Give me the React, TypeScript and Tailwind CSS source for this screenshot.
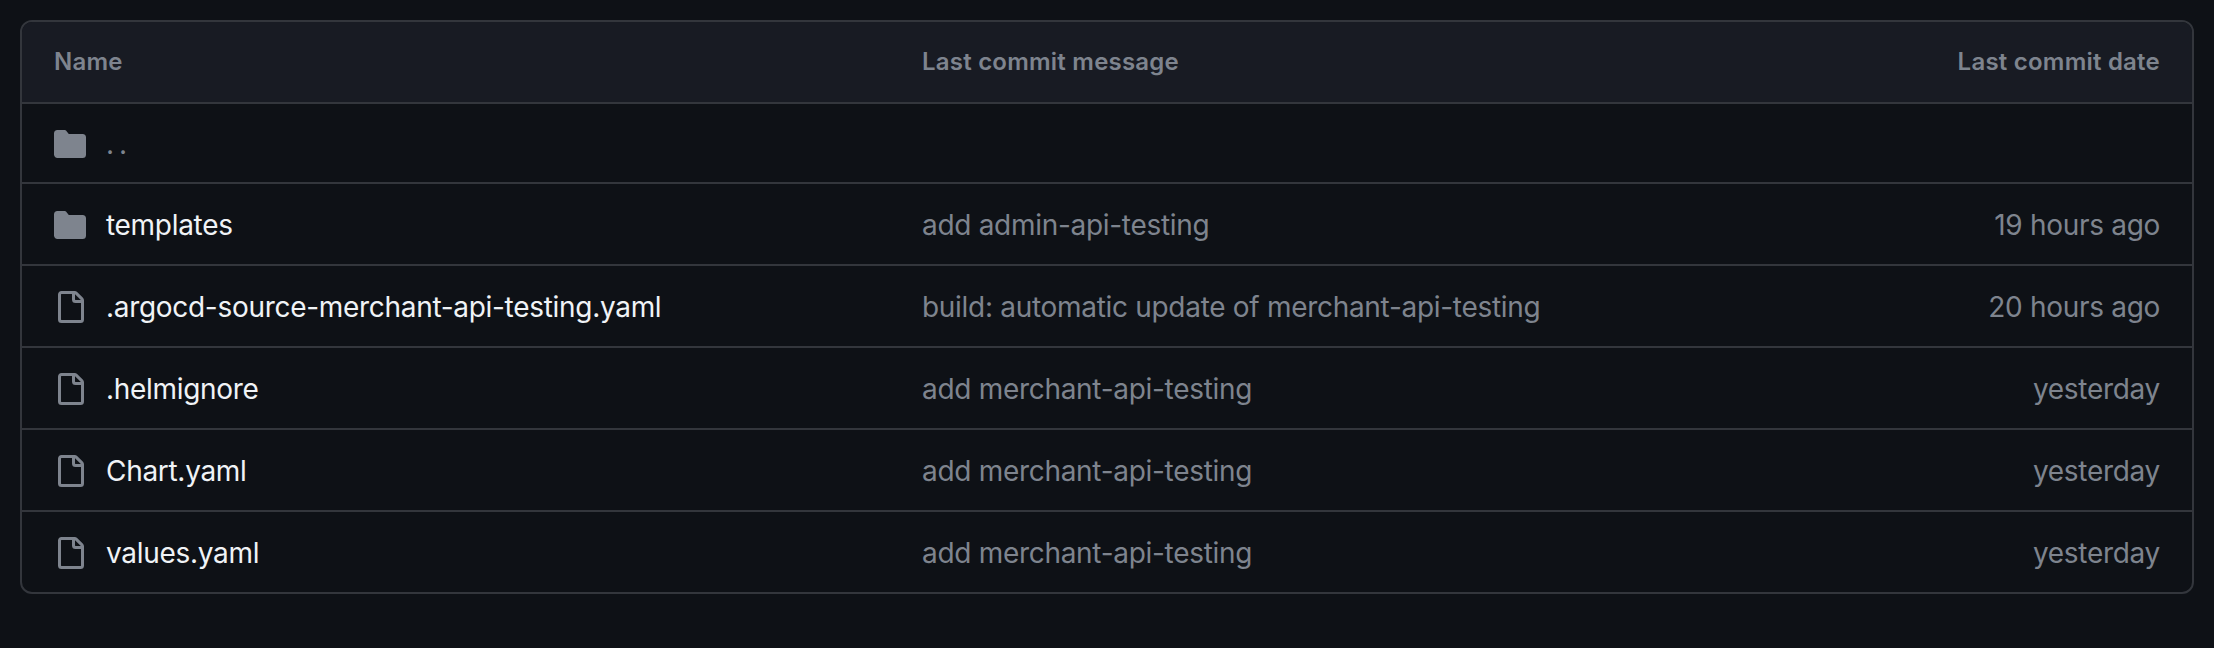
const FolderIcon = () => (
  <svg viewBox="0 0 16 16" width="32" height="32" fill="#7e848e" className="shrink-0">
    <path d="M1.75 1A1.75 1.75 0 0 0 0 2.75v10.5C0 14.216.784 15 1.75 15h12.5A1.75 1.75 0 0 0 16 13.25v-8.5A1.75 1.75 0 0 0 14.25 3H7.5a.25.25 0 0 1-.2-.1l-.9-1.2C6.07 1.26 5.55 1 5 1H1.75Z" />
  </svg>
);

const FileIcon = () => (
  <svg viewBox="0 0 16 16" width="32" height="32" fill="#7e848e" className="shrink-0">
    <path d="M2 1.75C2 .784 2.784 0 3.75 0h6.586c.464 0 .909.184 1.237.513l2.914 2.914c.329.328.513.773.513 1.237v9.586A1.75 1.75 0 0 1 13.25 16h-9.5A1.75 1.75 0 0 1 2 14.25Zm1.75-.25a.25.25 0 0 0-.25.25v12.5c0 .138.112.25.25.25h9.5a.25.25 0 0 0 .25-.25V6h-2.75A1.75 1.75 0 0 1 9 4.25V1.5Zm6.75.062V4.25c0 .138.112.25.25.25h2.688l-.011-.013-2.914-2.914-.013-.011Z" />
  </svg>
);

const rows = [
  { name: 'templates', folder: true, message: 'add admin-api-testing', date: '19 hours ago' },
  { name: '.argocd-source-merchant-api-testing.yaml', folder: false, message: 'build: automatic update of merchant-api-testing', date: '20 hours ago' },
  { name: '.helmignore', folder: false, message: 'add merchant-api-testing', date: 'yesterday' },
  { name: 'Chart.yaml', folder: false, message: 'add merchant-api-testing', date: 'yesterday' },
  { name: 'values.yaml', folder: false, message: 'add merchant-api-testing', date: 'yesterday' },
];

export default function App() {
  return (
    <div className="h-[648px] bg-[#0e1116] p-5 font-['Inter',sans-serif] text-[28px] tracking-[-0.3px]">
      <div className="rounded-xl border-2 border-[#33363c] overflow-hidden">
        {/* Header */}
        <div className="flex items-center h-20 px-8 bg-[#181b23] text-[24px] font-semibold text-[#7e848e] tracking-[0.22px]">
          <div className="w-[868px]">Name</div>
          <div className="flex-1">Last commit message</div>
          <div>Last commit date</div>
        </div>

        {/* Parent dir */}
        <div className="flex items-center h-20 px-8 border-t-2 border-[#33363c]">
          <div className="pt-0.5"><FolderIcon /></div>
          <span className="ml-5 pt-0.5 text-[#7e848e] tracking-[-1.5px]">. .</span>
        </div>

        {rows.map(row => (
          <div key={row.name} className="flex items-center h-[82px] px-8 pt-0.5 border-t-2 border-[#33363c]">
            <div className="flex items-center w-[868px]">
              {row.folder ? <FolderIcon /> : <FileIcon />}
              <span className="ml-5 text-[#f0f3f6]">{row.name}</span>
            </div>
            <div className="flex-1 text-[#7e848e]">{row.message}</div>
            <div className="text-[#7e848e]">{row.date}</div>
          </div>
        ))}
      </div>
    </div>
  );
}
